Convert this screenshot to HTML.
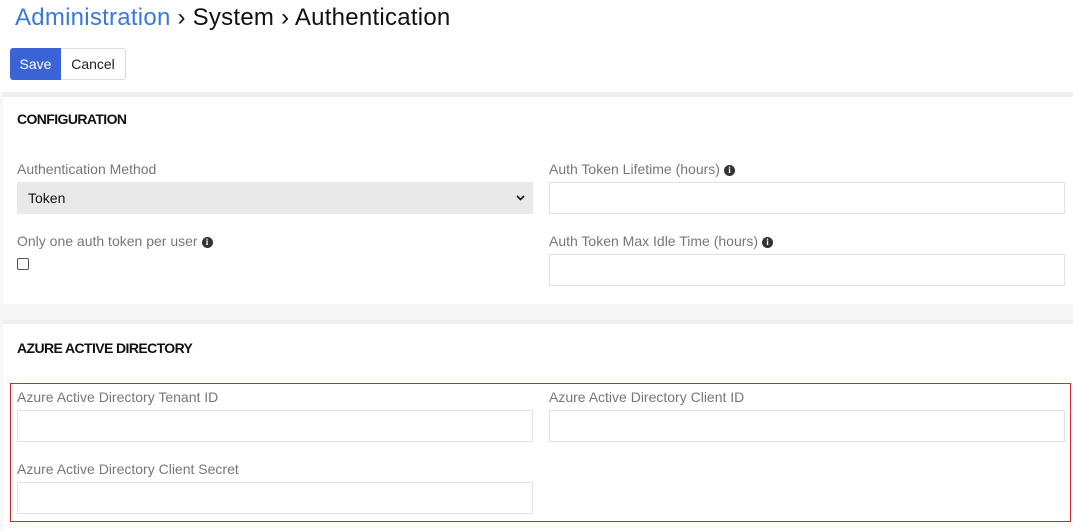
<!DOCTYPE html>
<html><head><style>
body{margin:0;width:1073px;height:531px;overflow:hidden;background:#f7f7f7;font-family:"Liberation Sans",sans-serif;position:relative}
.a{position:absolute}
.top{left:0;top:0;width:1073px;height:92px;background:#fff}
.panel{background:#fff;left:3px;width:1070px}
.h{font-weight:bold;font-size:14px;color:#111;letter-spacing:-0.6px}
.lbl{font-size:14px;color:#777}
.inp{border:1px solid #e2e2e2;background:#fff;box-sizing:border-box;height:32px}
.i{display:inline-block;width:11px;height:11px;border-radius:50%;background:#333;color:#fff;font-size:9px;font-weight:bold;text-align:center;line-height:11px;vertical-align:1px;margin-left:4px;font-family:"Liberation Serif",serif}
</style></head><body>
<div class="a top"></div>
<div class="a" style="left:15px;top:4px;font-size:24px;letter-spacing:0.25px;color:#111"><span style="color:#3a78e0">Administration</span> › System › Authentication</div>
<div class="a" style="left:10px;top:48px;width:51px;height:32px;background:#3a63d6;border-radius:3px 0 0 3px;color:#fff;font-size:14px;line-height:32px;text-align:center">Save</div>
<div class="a" style="left:61px;top:48px;width:65px;height:32px;border:1px solid #ddd;border-left:none;box-sizing:border-box;border-radius:0 3px 3px 0;background:#fff;color:#222;font-size:14px;line-height:30px;text-align:center">Cancel</div>
<div class="a panel" style="top:92px;height:212px;border-top:5px solid #eee;box-sizing:border-box"></div>
<div class="a h" style="left:17px;top:111px">CONFIGURATION</div>
<div class="a lbl" style="left:17px;top:161px">Authentication Method</div>
<div class="a" style="left:17px;top:182px;width:516px;height:32px;background:#e9e9e9;font-size:14px;color:#111;line-height:32px;text-indent:11px">Token<svg style="position:absolute;right:8px;top:13px" width="9" height="6" viewBox="0 0 9 6"><path d="M1 1l3.5 3.5L8 1" stroke="#111" stroke-width="1.6" fill="none"/></svg></div>
<div class="a lbl" style="left:549px;top:161px">Auth Token Lifetime (hours)<span class="i">i</span></div>
<div class="a inp" style="left:549px;top:182px;width:516px"></div>
<div class="a lbl" style="left:17px;top:233px">Only one auth token per user<span class="i">i</span></div>
<div class="a" style="left:17px;top:258px;width:12px;height:12px;border:1px solid #555;border-radius:2px;box-sizing:border-box;background:#fff"></div>
<div class="a lbl" style="left:549px;top:233px">Auth Token Max Idle Time (hours)<span class="i">i</span></div>
<div class="a inp" style="left:549px;top:254px;width:516px"></div>
<div class="a panel" style="top:320px;height:211px;border-top:4px solid #eee;box-sizing:border-box"></div>
<div class="a h" style="left:17px;top:340px">AZURE ACTIVE DIRECTORY</div>
<div class="a" style="left:10px;top:383px;width:1061px;height:139px;border:1px solid #d9262c;box-sizing:border-box"></div>
<div class="a lbl" style="left:17px;top:389px">Azure Active Directory Tenant ID</div>
<div class="a inp" style="left:17px;top:410px;width:516px"></div>
<div class="a lbl" style="left:549px;top:389px">Azure Active Directory Client ID</div>
<div class="a inp" style="left:549px;top:410px;width:516px"></div>
<div class="a lbl" style="left:17px;top:461px">Azure Active Directory Client Secret</div>
<div class="a inp" style="left:17px;top:482px;width:516px"></div>
</body></html>
